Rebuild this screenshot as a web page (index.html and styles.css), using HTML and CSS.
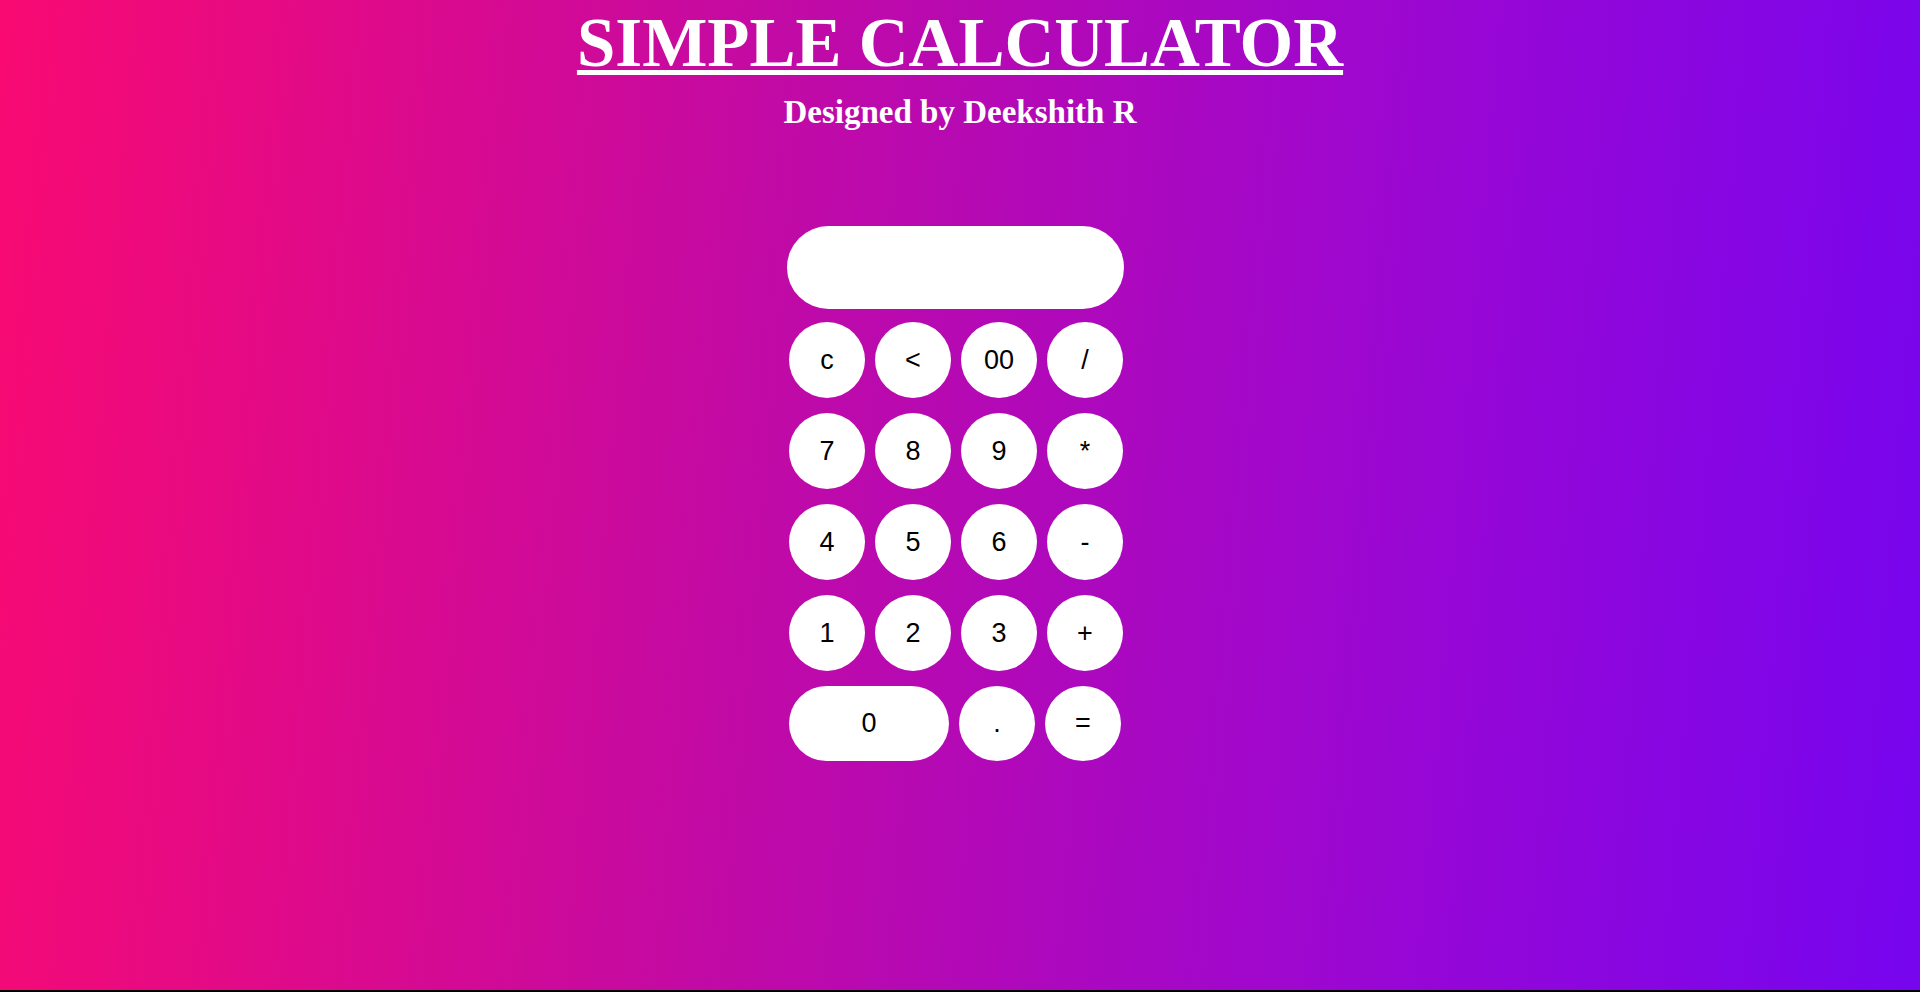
FILE: index.html
```html
<!DOCTYPE html>
<html lang="en">
<head>
<meta charset="utf-8">
<title>Simple Calculator</title>
<link rel="stylesheet" href="styles.css">
</head>
<body>
<div class="page">
  <header class="header">
    <h1 class="title">SIMPLE CALCULATOR</h1>
    <h2 class="subtitle">Designed by Deekshith R</h2>
  </header>
  <main class="calc-wrap">
    <div class="calc">
      <div class="display"></div>
      <div class="keys">
        <button class="key">c</button>
        <button class="key">&lt;</button>
        <button class="key">00</button>
        <button class="key">/</button>
        <button class="key">7</button>
        <button class="key">8</button>
        <button class="key">9</button>
        <button class="key">*</button>
        <button class="key">4</button>
        <button class="key">5</button>
        <button class="key">6</button>
        <button class="key">-</button>
        <button class="key">1</button>
        <button class="key">2</button>
        <button class="key">3</button>
        <button class="key">+</button>
      </div>
      <div class="last-row">
        <button class="key key-wide">0</button>
        <button class="key key-small">.</button>
        <button class="key key-small">=</button>
      </div>
    </div>
  </main>
</div>
<div class="bottom-strip"></div>
</body>
</html>
```
FILE: styles.css
```css
html {
  background: #000;
}
body {
  margin: 0;
}
.page {
  height: 990px;
  background: linear-gradient(95deg, #f90a72 0%, #c10aa6 40%, #9a07d3 72%, #7605ef 100%);
  display: flex;
  flex-direction: column;
  align-items: center;
  overflow: hidden;
}
.bottom-strip {
  height: 2px;
  background: #000;
}
.header {
  display: flex;
  flex-direction: column;
  align-items: center;
  color: #fff;
  font-family: "Liberation Serif", "Times New Roman", serif;
  font-weight: bold;
}
.title {
  margin: 4px 0 0;
  font-size: 69px;
  line-height: 79px;
  font-weight: bold;
  text-decoration: underline;
  text-decoration-thickness: 5px;
  text-underline-offset: 4px;
}
.subtitle {
  margin: 10px 0 0;
  font-size: 33px;
  line-height: 38px;
  font-weight: bold;
}
.calc-wrap {
  margin-top: 95px;
  padding-right: 9px;
}
.calc {
  width: 337px;
  display: flex;
  flex-direction: column;
  align-items: flex-start;
}
.display {
  width: 337px;
  height: 83px;
  background: #fff;
  border-radius: 42px;
}
.keys {
  margin: 13px 0 0 2px;
  display: grid;
  grid-template-columns: repeat(4, 76px);
  grid-auto-rows: 76px;
  column-gap: 10px;
  row-gap: 15px;
}
.key {
  border: none;
  background: #fff;
  border-radius: 50%;
  padding: 0;
  font-family: "Liberation Sans", Arial, sans-serif;
  font-size: 27px;
  color: #000;
  width: 76px;
  height: 76px;
}
.last-row {
  margin: 15px 0 0 2px;
  display: flex;
  gap: 10px;
}
.key-wide {
  width: 160px;
  height: 75px;
  border-radius: 38px;
}
.key-small {
  width: 76px;
  height: 75px;
}
```
